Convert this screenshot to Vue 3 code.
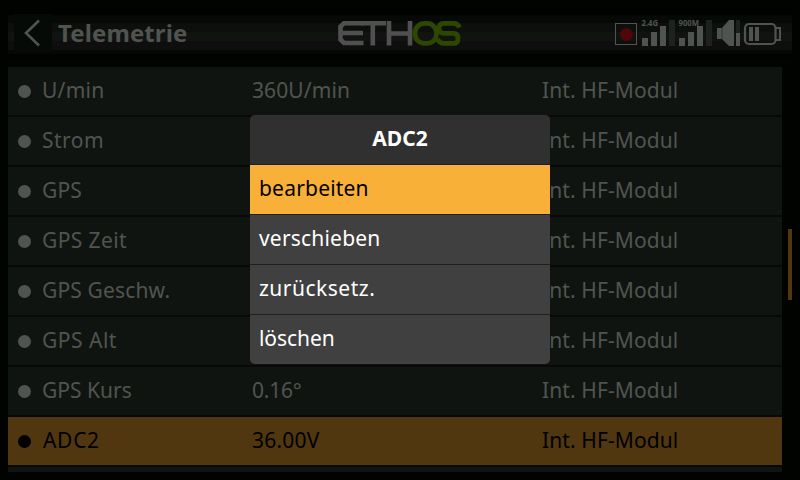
<script setup>
const rows = [
  { name: 'U/min', value: '360U/min', nameSpacing: 0.25, valueSpacing: 0.1 },
  { name: 'Strom', value: '', nameSpacing: 0.5 },
  { name: 'GPS', value: '', nameSpacing: 0.1 },
  { name: 'GPS Zeit', value: '', nameSpacing: 0.4 },
  { name: 'GPS Geschw.', value: '', nameSpacing: 0.15 },
  { name: 'GPS Alt', value: '', nameSpacing: 0.5 },
  { name: 'GPS Kurs', value: '0.16°', nameSpacing: 0, valueSpacing: -0.2 },
  { name: 'ADC2', value: '36.00V', nameSpacing: 0.7, valueSpacing: 0.2, active: true }
]
const actions = [
  { label: 'bearbeiten', spacing: 0.2 },
  { label: 'verschieben', spacing: 0.2 },
  { label: 'zurücksetz.', spacing: 0.5 },
  { label: 'löschen', spacing: -0.05 }
]
const spacing = (n = 0) => ({ letterSpacing: `${n}px` })
</script>

<template>
  <div class="screen">
    <header class="topbar">
      <button class="back" aria-label="Zurück">
        <svg width="38" height="38" viewBox="0 0 38 38"><path d="M25 6.500L12 19L25 31.500" fill="none" stroke="#505450" stroke-width="2.600" /></svg>
      </button>
      <h1>Telemetrie</h1>
      <svg class="logo" width="124" height="26" viewBox="0 0 124 26" fill="none">
        <g stroke="#505050" stroke-width="4.600">
          <path d="M25 3.300H6L2.500 6.500V19.500L6 23H25.500M3 13H25" />
          <path d="M23 3.300H48M34.800 3V25.500M51 1V25.500M51 13.500H72M72 1V25.500" />
        </g>
        <g stroke="#2d4700" stroke-width="4.800">
          <rect x="77" y="3.400" width="21.500" height="20" rx="9.500" />
          <path d="M121.500 7.500Q120 3.400 115.500 3.400H106Q101 3.400 101 8.300T106 13.400H115.500Q120 13.400 120 18.400T115.500 23.400H106Q101.500 23.400 99.500 19" />
        </g>
      </svg>
      <svg class="status" width="168" height="32" viewBox="614 15 168 32">
        <rect x="615.500" y="23.500" width="21" height="21" fill="none" stroke="#505450" />
        <circle cx="626.500" cy="34.500" r="6.400" fill="#500707" />
        <g fill="#505450">
          <path d="M642 38h6v8h-6zM651 32h6v14h-6zM660 26h6v20h-6zM679 38h6v8h-6zM688 32h6v14h-6zM697 26h6v20h-6z" />
          <text x="641.500" y="26" textLength="16.500" lengthAdjust="spacingAndGlyphs">2.4G</text>
          <text x="678.500" y="26" textLength="20.500" lengthAdjust="spacingAndGlyphs">900M</text>
          <path d="M717 28h5l7-8h5v26h-5l-7-7h-5z" />
          <path d="M749 27h4v14h-4zM755 27h4v14h-4z" />
        </g>
        <path d="M722 28v11" stroke="#343834" />
        <path d="M669 20h6v26h-6zM706 20h6v26h-6zM736 20h4v13h-4z" fill="#1e221f" />
        <path d="M736 33h4v13h-4z" fill="#505450" />
        <rect x="745" y="24" width="30.500" height="20" rx="4" fill="none" stroke="#505450" stroke-width="2.200" />
        <path d="M776 28h4v12h-4" fill="none" stroke="#505450" stroke-width="2" />
      </svg>
    </header>

    <main class="list">
      <div v-for="row in rows" :key="row.name" class="row" :class="{ active: row.active }">
        <i class="dot"></i>
        <span class="name" :style="spacing(row.nameSpacing)">{{ row.name }}</span>
        <span class="value" :style="spacing(row.valueSpacing)">{{ row.value }}</span>
        <span class="source">Int. HF-Modul</span>
      </div>
      <div class="row"></div>
    </main>
    <div class="scrollbar"></div>

    <section class="dialog">
      <h2>ADC2</h2>
      <div v-for="(action, i) in actions" :key="action.label" class="action" :class="{ selected: i === 0 }" :style="spacing(action.spacing)">{{ action.label }}</div>
    </section>
  </div>
</template>

<style>
body { margin: 0; background: #000300; }
</style>

<style scoped>
.screen {
  position: relative;
  box-sizing: border-box;
  width: 800px;
  height: 480px;
  padding: 9px 8px 8px;
  overflow: hidden;
  background: #000300;
  color: #505450;
  font: 21px/28px "Noto Sans", sans-serif;
}
.topbar {
  display: flex;
  box-sizing: border-box;
  height: 49px;
  padding: 5px 10px 6px 6px;
  background: linear-gradient(#000200 0 12%, #070907 14% 28%, #0d0f0d 28% 46%, #111311 46% 66%, #0d0e0d 66% 84%, #050605 84% 91%, #000200 91%);
}
.back {
  flex: none;
  width: 38px;
  height: 38px;
  padding: 0;
  border: 0;
  background: #060a07;
}
.back svg { display: block; }
h1 {
  flex: none;
  width: 280px;
  margin: 3px 0 0 6px;
  font-size: 24px;
  line-height: 32px;
  font-weight: 700;
  letter-spacing: 0.1px;
}
.logo { flex: none; margin: 6px 152px 0 0; }
.status { margin-top: 1px; flex: none; }
.status text { font-size: 8.5px; font-weight: 700; }
.list {
  display: flex;
  flex-direction: column;
  gap: 2px;
  width: 774px;
  height: 405px;
  margin-top: 9px;
  overflow: hidden;
  background: #080807;
}
.row {
  display: grid;
  grid-template-columns: 24px 210px 290px 1fr;
  align-items: center;
  flex: none;
  box-sizing: border-box;
  height: 48px;
  padding-left: 10px;
  background: #101410;
  white-space: nowrap;
}
.row span { padding-bottom: 2px; }
.source { letter-spacing: 0.1px; }
.row.active { background: #503710; color: #000; }
.row.active .name { padding-left: 1px; }
.dot {
  width: 13px;
  height: 13px;
  border-radius: 50%;
  background: currentColor;
}
.scrollbar {
  position: absolute;
  left: 788px;
  top: 229px;
  width: 4px;
  height: 71px;
  background: #503710;
}
.dialog {
  position: absolute;
  left: 250px;
  top: 115px;
  width: 300px;
  height: 249px;
  overflow: hidden;
  border-radius: 5px;
  background: #202020;
  color: #fff;
}
h2 {
  height: 49px;
  margin: 0 0 1px;
  background: #303030;
  text-align: center;
  font-size: 21px;
  line-height: 47px;
  font-weight: 700;
}
.action {
  height: 49px;
  margin-bottom: 1px;
  padding-left: 9px;
  background: #404040;
  line-height: 47px;
}
.selected { background: #f8b038; color: #000; }
</style>
